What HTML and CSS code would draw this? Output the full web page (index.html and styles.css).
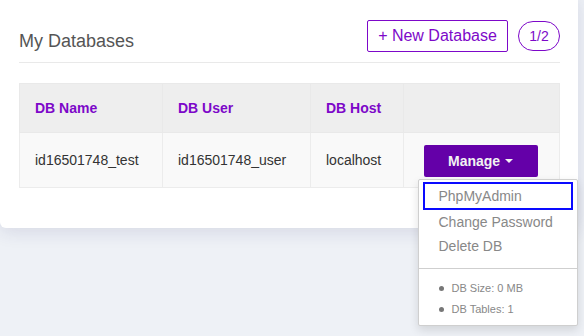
FILE: index.html
```html
<!DOCTYPE html>
<html lang="en">
  <head>
    <meta charset="UTF-8" />
    <title>My Databases</title>
    <link rel="stylesheet" href="styles.css">
  </head>
  <body>
    <div class="card">
      <div class="card-head">
        <h2>My Databases</h2>
        <div class="actions">
          <button class="btn-outline">+ New Database</button>
          <span class="count">1/2</span>
        </div>
      </div>

      <table class="db-table">
        <colgroup>
          <col class="c-name" />
          <col class="c-user" />
          <col class="c-host" />
          <col class="c-act" />
        </colgroup>
        <thead>
          <tr>
            <th>DB Name</th>
            <th>DB User</th>
            <th>DB Host</th>
            <th></th>
          </tr>
        </thead>
        <tbody>
          <tr>
            <td>id16501748_test</td>
            <td>id16501748_user</td>
            <td>localhost</td>
            <td class="act-cell">
              <div class="manage-wrap">
                <button class="btn-manage">Manage <span class="caret"></span></button>
                <ul class="dropdown">
                  <li class="active"><a href="#">PhpMyAdmin</a></li>
                  <li><a href="#">Change Password</a></li>
                  <li><a href="#">Delete DB</a></li>
                  <li class="divider"></li>
                  <li class="info">DB Size: 0 MB</li>
                  <li class="info">DB Tables: 1</li>
                </ul>
              </div>
            </td>
          </tr>
        </tbody>
      </table>
    </div>
  </body>
</html>
```

FILE: styles.css
```css
* {
  box-sizing: border-box;
}
body {
  margin: 0;
  font-family: "Liberation Sans", Arial, sans-serif;
  background: #eef1f6;
  height: 336px;
  overflow: hidden;
}
.card {
  width: 578px;
  margin-top: -6px;
  padding: 26px 18px 40px 19px;
  background: #fff;
  border-radius: 6px;
  box-shadow: 0 4px 18px rgba(40, 40, 110, 0.12);
}
.card-head {
  display: flex;
  justify-content: space-between;
  align-items: center;
  padding-bottom: 10px;
  border-bottom: 1px solid #e9e9e9;
}
.card-head h2 {
  margin: 11px 0 0;
  font-size: 18px;
  font-weight: 400;
  color: #555;
}
.actions {
  display: flex;
  align-items: center;
  gap: 10px;
}
.btn-outline {
  height: 32px;
  width: 141px;
  padding: 0;
  background: #fff;
  border: 1px solid #7d08c9;
  border-radius: 2px;
  color: #7d08c9;
  font-family: inherit;
  font-size: 16px;
}
.count {
  display: flex;
  align-items: center;
  justify-content: center;
  width: 42px;
  height: 30px;
  border: 1px solid #7d08c9;
  border-radius: 15px;
  color: #7d08c9;
  font-size: 14px;
}
.db-table {
  width: 540px;
  margin-top: 20px;
  table-layout: fixed;
  border-collapse: collapse;
  font-size: 14px;
}
.c-name { width: 143px; }
.c-user { width: 148px; }
.c-host { width: 93px; }
.c-act { width: 156px; }
.db-table th {
  height: 49px;
  padding: 0 15px;
  text-align: left;
  background: #eeeeee;
  color: #7d08c9;
  font-weight: 700;
  border: 1px solid #e9e9e9;
}
.db-table td {
  height: 55px;
  padding: 0 15px;
  background: #f9f9f9;
  color: #333;
  border: 1px solid #ececec;
  white-space: nowrap;
}
.db-table td.act-cell {
  text-align: center;
  padding: 1px 2px 0 0;
}
.manage-wrap {
  position: relative;
  display: inline-block;
}
.btn-manage {
  width: 114px;
  height: 32px;
  background: #6400a8;
  border: none;
  border-radius: 2px;
  color: #f2f2f2;
  font-family: inherit;
  font-size: 14px;
  font-weight: 700;
}
.caret {
  display: inline-block;
  width: 0;
  height: 0;
  margin-left: 1px;
  vertical-align: 3px;
  border-left: 4px solid transparent;
  border-right: 4px solid transparent;
  border-top: 4px solid #f2f2f2;
}
.dropdown {
  position: absolute;
  top: 34px;
  left: -6px;
  width: 160px;
  margin: 0;
  padding: 2px 0 5px;
  list-style: none;
  text-align: left;
  white-space: nowrap;
  background: #fff;
  border: 1px solid #cfcfcf;
  border-radius: 2px;
  box-shadow: 0 4px 10px rgba(0, 0, 0, 0.12);
  z-index: 5;
}
.dropdown a {
  display: block;
  margin: 0 4px;
  padding: 0 14px;
  height: 24px;
  line-height: 20px;
  color: #888;
  text-decoration: none;
  font-size: 14px;
  border: 2px solid transparent;
}
.dropdown li.active a {
  height: 28px;
  line-height: 24px;
  border-color: #0a0aff;
}
.dropdown .divider {
  height: 1px;
  margin: 10px 0 9px;
  background: #cfcfcf;
}
.dropdown .info {
  position: relative;
  padding: 0 0 0 33px;
  height: 21px;
  line-height: 21px;
  font-size: 11px;
  color: #888;
}
.dropdown .info::before {
  content: "";
  position: absolute;
  left: 20px;
  top: 8px;
  width: 5px;
  height: 5px;
  border-radius: 50%;
  background: #777;
}
```
